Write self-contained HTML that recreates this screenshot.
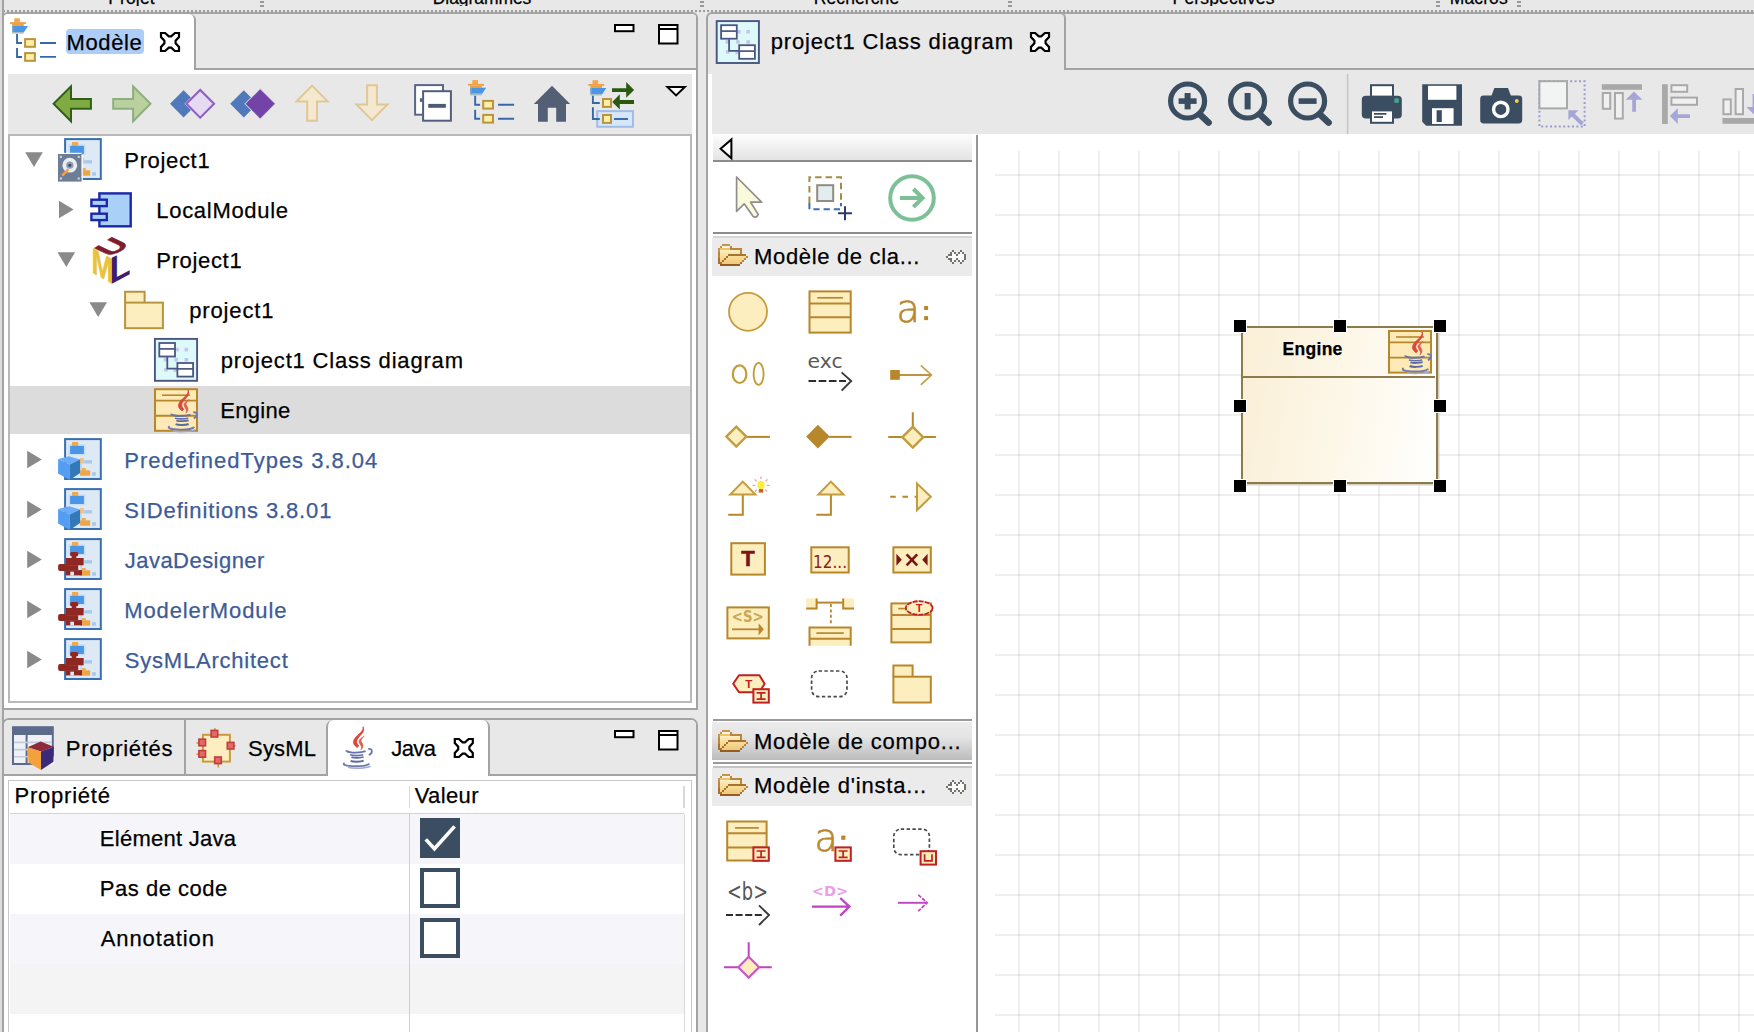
<!DOCTYPE html>
<html lang="fr"><head><meta charset="utf-8"><title>Modelio</title>
<style>
html,body{margin:0;padding:0}
body{width:1754px;height:1032px;overflow:hidden;background:#e8e8e8;position:relative;font-family:"Liberation Sans",sans-serif}
#root{position:absolute;left:0;top:0;width:1754px;height:1032px;overflow:hidden}
#root>div{position:absolute;box-sizing:border-box}
.t{position:absolute;white-space:nowrap;display:block;-webkit-text-stroke:0.25px currentColor}
#ov{position:absolute;left:0;top:0}
</style></head><body><div id="root">
<span id="t1" class="t" style="left:108.24999999999999px;top:-12.86px;line-height:23.5px;font-size:17.5px;color:#000;font-weight:normal;letter-spacing:0.13px;">Projet</span>
<span id="t2" class="t" style="left:432.75px;top:-12.86px;line-height:23.5px;font-size:17.5px;color:#000;font-weight:normal;letter-spacing:-0.07px;">Diagrammes</span>
<span id="t3" class="t" style="left:813.7px;top:-12.86px;line-height:23.5px;font-size:17.5px;color:#000;font-weight:normal;letter-spacing:0.11px;">Recherche</span>
<span id="t4" class="t" style="left:1172.6px;top:-12.86px;line-height:23.5px;font-size:17.5px;color:#000;font-weight:normal;letter-spacing:0.15px;">Perspectives</span>
<span id="t5" class="t" style="left:1449.8px;top:-12.86px;line-height:23.5px;font-size:17.5px;color:#000;font-weight:normal;letter-spacing:0.1px;">Macros</span>
<div style="left:0px;top:6.2px;width:1754px;height:3.8px;background:#e8e8e8"></div>
<div style="left:3px;top:10px;width:1751px;height:2px;background-image:repeating-linear-gradient(90deg,#9c9c9c 0,#9c9c9c 2px,transparent 2px,transparent 4px)"></div>
<div style="left:260px;top:1px;width:4px;height:2px;background:#9a9a9a"></div>
<div style="left:260px;top:5px;width:4px;height:2px;background:#9a9a9a"></div>
<div style="left:700px;top:1px;width:4px;height:2px;background:#9a9a9a"></div>
<div style="left:700px;top:5px;width:4px;height:2px;background:#9a9a9a"></div>
<div style="left:1008px;top:1px;width:4px;height:2px;background:#9a9a9a"></div>
<div style="left:1008px;top:5px;width:4px;height:2px;background:#9a9a9a"></div>
<div style="left:1435.5px;top:1px;width:4px;height:2px;background:#9a9a9a"></div>
<div style="left:1435.5px;top:5px;width:4px;height:2px;background:#9a9a9a"></div>
<div style="left:1517px;top:1px;width:4px;height:2px;background:#9a9a9a"></div>
<div style="left:1517px;top:5px;width:4px;height:2px;background:#9a9a9a"></div>
<div style="left:0px;top:0px;width:2px;height:1032px;background:#dedede"></div>
<div style="left:2px;top:0px;width:2px;height:1032px;background:#a4a4a4"></div>
<div style="left:2px;top:12px;width:696px;height:698px;border:2px solid #a3a3a3;border-radius:6px 6px 0 0;background:#fff"></div>
<div style="left:4px;top:14px;width:692px;height:56px;background:#e8e8e8;border-bottom:2px solid #a3a3a3;border-radius:4px 4px 0 0"></div>
<div style="left:4px;top:14px;width:192px;height:56px;background:#fff;border-right:2px solid #a3a3a3;border-radius:4px 6px 0 0"></div>
<div style="left:8px;top:74px;width:684px;height:60px;background:#e8e8e8"></div>
<div style="left:8px;top:134px;width:684px;height:569px;border:2px solid #b9b9b9;background:#fff"></div>
<div style="left:10px;top:386px;width:680px;height:48px;background:#dcdcdc"></div>
<div style="left:66px;top:28.5px;width:78px;height:25.5px;background:#accdf8;border-radius:4px"></div>
<span id="t6" class="t" style="left:66.5px;top:28.63px;line-height:28px;font-size:22px;color:#000;font-weight:normal;letter-spacing:0.64px;">Modèle</span>
<span id="t7" class="t" style="left:124.3px;top:146.83px;line-height:28px;font-size:22px;color:#000;font-weight:normal;letter-spacing:0.66px;">Project1</span>
<span id="t8" class="t" style="left:156.3px;top:196.83px;line-height:28px;font-size:22px;color:#000;font-weight:normal;letter-spacing:0.7px;">LocalModule</span>
<span id="t9" class="t" style="left:156.3px;top:246.83px;line-height:28px;font-size:22px;color:#000;font-weight:normal;letter-spacing:0.66px;">Project1</span>
<span id="t10" class="t" style="left:189.3px;top:296.83px;line-height:28px;font-size:22px;color:#000;font-weight:normal;letter-spacing:0.84px;">project1</span>
<span id="t11" class="t" style="left:220.8px;top:346.83px;line-height:28px;font-size:22px;color:#000;font-weight:normal;letter-spacing:0.82px;">project1 Class diagram</span>
<span id="t12" class="t" style="left:220.3px;top:396.83px;line-height:28px;font-size:22px;color:#000;font-weight:normal;letter-spacing:0.3px;">Engine</span>
<span id="t13" class="t" style="left:124.3px;top:446.83px;line-height:28px;font-size:22px;color:#3d5b96;font-weight:normal;letter-spacing:0.98px;">PredefinedTypes 3.8.04</span>
<span id="t14" class="t" style="left:124.3px;top:496.83px;line-height:28px;font-size:22px;color:#3d5b96;font-weight:normal;letter-spacing:0.86px;">SIDefinitions 3.8.01</span>
<span id="t15" class="t" style="left:124.8px;top:546.83px;line-height:28px;font-size:22px;color:#3d5b96;font-weight:normal;letter-spacing:0.46px;">JavaDesigner</span>
<span id="t16" class="t" style="left:124.3px;top:596.83px;line-height:28px;font-size:22px;color:#3d5b96;font-weight:normal;letter-spacing:0.87px;">ModelerModule</span>
<span id="t17" class="t" style="left:124.8px;top:646.83px;line-height:28px;font-size:22px;color:#3d5b96;font-weight:normal;letter-spacing:0.78px;">SysMLArchitect</span>
<div style="left:2px;top:718px;width:696px;height:330px;border:2px solid #a3a3a3;border-radius:7px 7px 0 0;background:#fff"></div>
<div style="left:4px;top:720px;width:692px;height:56px;background:#e8e8e8;border-bottom:2px solid #a3a3a3;border-radius:5px 5px 0 0"></div>
<div style="left:184px;top:720px;width:2px;height:55px;background:#a3a3a3"></div>
<div style="left:326px;top:720px;width:164px;height:56px;background:#fff;border-left:2px solid #a3a3a3;border-right:2px solid #a3a3a3;border-radius:7px 7px 0 0"></div>
<span id="t18" class="t" style="left:65.8px;top:734.93px;line-height:28px;font-size:22px;color:#000;font-weight:normal;letter-spacing:0.72px;">Propriétés</span>
<span id="t19" class="t" style="left:248.10000000000002px;top:734.93px;line-height:28px;font-size:22px;color:#000;font-weight:normal;letter-spacing:0.15px;">SysML</span>
<span id="t20" class="t" style="left:391.3px;top:734.93px;line-height:28px;font-size:22px;color:#000;font-weight:normal;letter-spacing:-0.62px;">Java</span>
<div style="left:8px;top:780px;width:684px;height:260px;border:1.5px solid #c9c9c9;background:#fff"></div>
<div style="left:10px;top:813px;width:674px;height:1px;background:#d4d4d4"></div>
<div style="left:10px;top:814px;width:674px;height:50px;background:#f5f5fa"></div>
<div style="left:10px;top:914px;width:674px;height:50px;background:#f5f5fa"></div>
<div style="left:10px;top:964px;width:674px;height:50px;background:#f4f4f4"></div>
<div style="left:408.5px;top:786px;width:1.5px;height:22px;background:#d9d9d9"></div>
<div style="left:683px;top:786px;width:1.5px;height:22px;background:#d9d9d9"></div>
<div style="left:408.5px;top:814px;width:1.5px;height:230px;background:#cfcfcf"></div>
<div style="left:683.5px;top:814px;width:1.5px;height:230px;background:#d9d9d9"></div>
<span id="t21" class="t" style="left:14.600000000000001px;top:782.43px;line-height:28px;font-size:22px;color:#000;font-weight:normal;letter-spacing:0.75px;">Propriété</span>
<span id="t22" class="t" style="left:414.7px;top:782.43px;line-height:28px;font-size:22px;color:#000;font-weight:normal;letter-spacing:0.37px;">Valeur</span>
<span id="t23" class="t" style="left:99.8px;top:824.63px;line-height:28px;font-size:22px;color:#000;font-weight:normal;letter-spacing:0.27px;">Elément Java</span>
<span id="t24" class="t" style="left:99.8px;top:874.63px;line-height:28px;font-size:22px;color:#000;font-weight:normal;letter-spacing:0.52px;">Pas de code</span>
<span id="t25" class="t" style="left:100.8px;top:924.63px;line-height:28px;font-size:22px;color:#000;font-weight:normal;letter-spacing:0.88px;">Annotation</span>
<div style="left:706px;top:12px;width:1060px;height:1032px;border:2px solid #a3a3a3;border-radius:6px 0 0 0;background:#e8e8e8"></div>
<div style="left:1064px;top:18px;width:700px;height:52px;border-bottom:2px solid #a3a3a3;border-left:2px solid #a3a3a3"></div>
<div style="left:1056px;top:12px;width:10px;height:12px;border-right:2px solid #a3a3a3;border-top:2px solid #a3a3a3;border-top-right-radius:6px;background:#e8e8e8"></div>
<div style="left:708px;top:74px;width:4px;height:960px;background:#fff"></div>
<span id="t26" class="t" style="left:770.8px;top:28.43px;line-height:28px;font-size:22px;color:#000;font-weight:normal;letter-spacing:0.82px;">project1 Class diagram</span>
<div style="left:712px;top:134px;width:260px;height:900px;background:#fff"></div>
<div style="left:972px;top:134px;width:6px;height:900px;background:#fff"></div>
<div style="left:976px;top:135px;width:2px;height:900px;background:#969696"></div>
<div style="left:978px;top:134px;width:776px;height:900px;background:#fff"></div>
<div style="left:713px;top:134px;width:259px;height:26px;background:linear-gradient(#fdfdfd,#e4e4e4)"></div>
<div style="left:713px;top:160px;width:259px;height:2px;background:#8c8c8c"></div>
<div style="left:713px;top:232px;width:259px;height:2px;background:#8c8c8c"></div>
<div style="left:713px;top:236px;width:259px;height:1.5px;background:#d6d6d6"></div>
<div style="left:712px;top:237.5px;width:260px;height:38.5px;background:#ebebeb"></div>
<span id="t27" class="t" style="left:754.0px;top:242.53px;line-height:28px;font-size:22px;color:#000;font-weight:normal;letter-spacing:0.67px;">Modèle de cla...</span>
<div style="left:713px;top:718.5px;width:259px;height:2px;background:#9a9a9a"></div>
<div style="left:712px;top:722px;width:260px;height:38px;background:linear-gradient(#ececec,#e4e4e4 40%,#bcbcbc)"></div>
<div style="left:713px;top:762px;width:259px;height:2px;background:#9a9a9a"></div>
<div style="left:713px;top:766px;width:259px;height:1.5px;background:#c4c4c4"></div>
<div style="left:712px;top:768px;width:260px;height:38px;background:#ebebeb"></div>
<span id="t28" class="t" style="left:754.0px;top:728.13px;line-height:28px;font-size:22px;color:#000;font-weight:normal;letter-spacing:0.79px;">Modèle de compo...</span>
<span id="t29" class="t" style="left:754.0px;top:772.43px;line-height:28px;font-size:22px;color:#000;font-weight:normal;letter-spacing:0.79px;">Modèle d'insta...</span>
<div style="left:995px;top:151px;width:760px;height:890px;background-image:linear-gradient(90deg,rgba(0,0,0,0.063) 2px,transparent 2px),linear-gradient(rgba(0,0,0,0.063) 2px,transparent 2px);background-size:40px 40px;background-position:23px 23px"></div>
<div style="left:1240.8px;top:326.3px;width:197.4px;height:157.8px;border:2px solid #8e7b4c;background:linear-gradient(100deg,#faefd6 0%,#fdf7e8 50%,#ffffff 100%);box-shadow:1.5px 1.5px 0 #d8d1c2"></div>
<div style="left:1242.8px;top:376px;width:192.4px;height:2px;background:#8e7b4c"></div>
<span id="t30" class="t" style="left:1282.6px;top:338.24px;line-height:23.5px;font-size:17.5px;color:#000;font-weight:bold;letter-spacing:0.28px;">Engine</span>
<svg id="ov" width="1754" height="1032" viewBox="0 0 1754 1032">
<g transform="translate(10.3 18)" ><g transform="translate(0 0)"><rect x="3.9" y="0.3" width="5.7" height="4" fill="#f2a74e"/><rect x="-0.3" y="4.1" width="15.9" height="1.9" fill="#f0a145"/><rect x="1.8" y="5.9" width="11.7" height="2.2" fill="#f0a145"/><path d="M1.8 8H17.7L13.8 14H1.8Z" fill="#4a96e6"/><rect x="1.8" y="8" width="1.5" height="6" fill="#8aa2b4"/><rect x="1.8" y="14" width="11.7" height="1.6" fill="#a9bcc6"/></g><path d="M6.75 15.9V24.95H11.7M6.75 30V38.95H11.7" fill="none" stroke="#3568a8" stroke-width="1.9"/><rect x="14.8" y="21.1" width="9.8" height="7.7" fill="#fdeea8" stroke="#b9943c" stroke-width="2"/><rect x="14.8" y="35.1" width="9.8" height="7.7" fill="#fdeea8" stroke="#b9943c" stroke-width="2"/><path d="M29.7 24.95h16M29.7 38.9h16" stroke="#3568a8" stroke-width="1.9"/></g>
<path transform="translate(170 42)" d="M-9 -9H-4.9L-1.2 -5.6H1.2L4.9 -9H9V-4.9L5.6 -1.2V1.2L9 4.9V9H4.9L1.2 5.6H-1.2L-4.9 9H-9V4.9L-5.6 1.2V-1.2L-9 -4.9Z" fill="#fff" stroke="#000" stroke-width="2.2" stroke-linejoin="miter"/>
<rect x="615" y="25" width="18.5" height="6.2" fill="#fff" stroke="#000" stroke-width="2"/>
<rect x="659" y="25" width="18.5" height="18.5" fill="#fff" stroke="#000" stroke-width="2"/>
<path d="M659 29h18.5" stroke="#000" stroke-width="2"/>
<polygon points="52.20,103.85 72.00,84.05 72.00,97.90 91.90,97.90 91.90,109.80 72.00,109.80 72.00,123.65" fill="#2f6016"/><polygon points="55.00,103.85 70.00,88.85 70.00,99.90 89.90,99.90 89.90,107.80 70.00,107.80 70.00,118.85" fill="#80ab43"/>
<polygon points="151.90,103.85 132.10,84.05 132.10,97.90 112.20,97.90 112.20,109.80 132.10,109.80 132.10,123.65" fill="#8eae7e"/><polygon points="149.10,103.85 134.10,88.85 134.10,99.90 114.20,99.90 114.20,107.80 134.10,107.80 134.10,118.85" fill="#bbd19d"/>
<path d="M170.0 103.8L183.6 90.2L197.2 103.8L183.6 117.39999999999999Z" fill="#4f79ba"/>
<path d="M184.39999999999998 103.8L200.2 88.0L216.0 103.8L200.2 119.6Z" fill="#d9d6e6"/>
<path d="M186.39999999999998 103.8L200.2 90.0L214.0 103.8L200.2 117.6Z" fill="#e6daf2" stroke="#8f5fc0" stroke-width="2"/>
<path d="M230.20000000000002 103.8L243.8 90.2L257.40000000000003 103.8L243.8 117.39999999999999Z" fill="#4f79ba"/>
<path d="M244.39999999999998 103.8L260.2 88.0L276.0 103.8L260.2 119.6Z" fill="#d9d6e6"/>
<path d="M245.6 103.8L260.2 89.2L274.8 103.8L260.2 118.39999999999999Z" fill="#7443a8"/>
<polygon points="312.10,84.30 330.20,102.40 318.00,102.40 318.00,121.70 306.20,121.70 306.20,102.40 294.00,102.40" fill="#dfc797"/><polygon points="312.10,87.10 325.40,100.40 316.00,100.40 316.00,119.70 308.20,119.70 308.20,100.40 298.80,100.40" fill="#f4e9ce"/>
<polygon points="366.10,84.30 377.90,84.30 377.90,103.60 389.80,103.60 371.95,121.50 354.10,103.60 366.10,103.60" fill="#dfc797"/><polygon points="368.10,86.30 375.90,86.30 375.90,105.60 385.00,105.60 371.95,118.70 358.90,105.60 368.10,105.60" fill="#f4e9ce"/>
<rect x="415.1" y="85.1" width="27.9" height="29.6" fill="#fff" stroke="#5a6783" stroke-width="2"/><rect x="419.9" y="98.2" width="2.4" height="3.7" fill="#56637f"/>
<rect x="423.1" y="91.2" width="27.8" height="29.5" fill="#fff" stroke="#525f7b" stroke-width="2"/>
<rect x="428.2" y="103.9" width="17.7" height="3.9" fill="#4f5b75"/>
<g transform="translate(468.4 79.8)" ><g transform="translate(0 0)"><rect x="3.9" y="0.3" width="5.7" height="4" fill="#f2a74e"/><rect x="-0.3" y="4.1" width="15.9" height="1.9" fill="#f0a145"/><rect x="1.8" y="5.9" width="11.7" height="2.2" fill="#f0a145"/><path d="M1.8 8H17.7L13.8 14H1.8Z" fill="#4a96e6"/><rect x="1.8" y="8" width="1.5" height="6" fill="#8aa2b4"/><rect x="1.8" y="14" width="11.7" height="1.6" fill="#a9bcc6"/></g><path d="M6.75 15.9V24.95H11.7M6.75 30V38.95H11.7" fill="none" stroke="#3568a8" stroke-width="1.9"/><rect x="14.8" y="21.1" width="9.8" height="7.7" fill="#fdeea8" stroke="#b9943c" stroke-width="2"/><rect x="14.8" y="35.1" width="9.8" height="7.7" fill="#fdeea8" stroke="#b9943c" stroke-width="2"/><path d="M29.7 24.95h16M29.7 38.9h16" stroke="#3568a8" stroke-width="1.9"/></g>
<path d="M552 85.8L570.2 104H566V121.8H556.2V107.7H547.8V121.8H538V104H533.8Z" fill="#525f75"/>
<g transform="translate(588 80.8)" ><g transform="translate(0.6 -0.9)"><rect x="3.9" y="0.3" width="5.7" height="4" fill="#f2a74e"/><rect x="-0.3" y="4.1" width="15.9" height="1.9" fill="#f0a145"/><rect x="1.8" y="5.9" width="11.7" height="2.2" fill="#f0a145"/><path d="M1.8 8H17.7L13.8 14H1.8Z" fill="#4a96e6"/><rect x="1.8" y="8" width="1.5" height="6" fill="#8aa2b4"/><rect x="1.8" y="14" width="11.7" height="1.6" fill="#a9bcc6"/></g><rect x="9.2" y="30.3" width="35.8" height="15.7" fill="#d6e6fb" stroke="#a0bde8" stroke-width="2"/><path d="M4.9 15V22.2H11.8M4.9 26.5V38.2H11.8" fill="none" stroke="#3568a8" stroke-width="1.9"/><rect x="15" y="18.2" width="8" height="7.9" fill="#fdeea8" stroke="#b9943c" stroke-width="2"/><rect x="15" y="34.2" width="8" height="7.9" fill="#fdeea8" stroke="#b9943c" stroke-width="2"/><path d="M26 38.2h14" stroke="#3568a8" stroke-width="1.9"/><path d="M24 7.4H38.2V1.2L46.1 9.3L38.2 16.9V11.2H24Z" fill="#2a5a10"/><path d="M46 19.3H31.8V13.4L24.2 21.2L31.8 28.8V23.2H46Z" fill="#2a5a10"/></g>
<path d="M667.4 87H684.8L676.1 95.4Z" fill="#fff" stroke="#000" stroke-width="2" stroke-linejoin="miter"/>
<path d="M25.2 152.3h17.6l-8.8 14.6z" fill="#8a8a8a"/>
<path d="M59 200.7l14.6 8.8l-14.6 8.8z" fill="#8a8a8a"/>
<path d="M57.5 252.3h17.6l-8.8 14.6z" fill="#8a8a8a"/>
<path d="M89.4 302.3h17.6l-8.8 14.6z" fill="#8a8a8a"/>
<path d="M27.2 450.7l14.6 8.8l-14.6 8.8z" fill="#8a8a8a"/>
<path d="M27.2 500.7l14.6 8.8l-14.6 8.8z" fill="#8a8a8a"/>
<path d="M27.2 550.7l14.6 8.8l-14.6 8.8z" fill="#8a8a8a"/>
<path d="M27.2 600.7l14.6 8.8l-14.6 8.8z" fill="#8a8a8a"/>
<path d="M27.2 650.7l14.6 8.8l-14.6 8.8z" fill="#8a8a8a"/>
<rect x="65.1" y="139.10" width="35.7" height="39.9" fill="#dee9f6" stroke="#386fb0" stroke-width="2"/><rect x="68.2" y="144.20" width="17.3" height="11.2" fill="#c9def4"/><rect x="72" y="142.00" width="6.2" height="4" fill="#f0a94e"/><rect x="70.1" y="145.90" width="13.8" height="8.1" fill="#4a96e6"/><rect x="80.1" y="158.00" width="3.8" height="5.5" fill="#f4c27a"/><rect x="84.2" y="160.20" width="7.8" height="3.3" fill="#a9c8ea"/><rect x="80.4" y="163.50" width="1.6" height="6.8" fill="#bdd7ef"/><rect x="82" y="168.10" width="3.8" height="2.4" fill="#f0a94e"/><rect x="80.1" y="170.30" width="10.1" height="5.4" fill="#f0a545"/><rect x="92" y="172.20" width="3.9" height="3.5" fill="#a9c8ea"/>
<g transform="translate(58 154)" ><rect x="0" y="0" width="23.6" height="27.6" fill="#6d7d96"/><rect x="23.6" y="1" width="1.2" height="25" fill="#fff"/><rect x="0" y="-1.2" width="23.6" height="1.2" fill="#fff"/><circle cx="11.8" cy="11.2" r="7.4" fill="#e9edf3"/><circle cx="11.8" cy="11.2" r="3.6" fill="#8e9bb0"/><circle cx="11.8" cy="11.2" r="1.5" fill="#3d4a66"/><path d="M4.2 21.6L10.4 15.2" stroke="#f3a23f" stroke-width="2.4"/><rect x="1.8" y="1.8" width="2.2" height="2.2" fill="#c6cedb"/><rect x="19.6" y="1.8" width="2.2" height="2.2" fill="#c6cedb"/><rect x="1.8" y="23.4" width="2.2" height="2.2" fill="#c6cedb"/><rect x="19.6" y="23.4" width="2.2" height="2.2" fill="#c6cedb"/></g>
<rect x="99.4" y="193.4" width="31.3" height="32.9" fill="#a9d0f7" stroke="#1c27ab" stroke-width="2.4"/>
<rect x="91.4" y="199.7" width="15.4" height="6.4" fill="#a9d0f7" stroke="#1c27ab" stroke-width="2.4"/>
<rect x="91.4" y="213.7" width="15.4" height="6.4" fill="#a9d0f7" stroke="#1c27ab" stroke-width="2.4"/>
<text transform="matrix(0.74 0.417 0 1 91.4 272)" font-family="Liberation Sans, sans-serif" font-weight="bold" font-size="35.6" fill="#e9c23c" stroke="#e9c23c" stroke-width="0.5">M</text><text transform="matrix(0.92 -0.488 0 1 109.4 284.9)" font-family="Liberation Sans, sans-serif" font-weight="bold" font-size="37.7" fill="#3f1f6b">L</text><text transform="matrix(1.31 -0.82 1.16 0.55 110.3 257.6)" font-family="Liberation Sans, sans-serif" font-weight="bold" font-size="22" fill="#7f1d2d" stroke="#7f1d2d" stroke-width="0.4">U</text>
<path d="M125.1 302.6V291.8H144.6V302.6" fill="#fdeec0" stroke="#b9943e" stroke-width="2"/>
<rect x="125.1" y="302.6" width="37.8" height="25.6" fill="#fdeec0" stroke="#b9943e" stroke-width="2"/>
<g transform="translate(154 338)" ><rect x="0.9" y="0.9" width="42.2" height="41.9" fill="#def9fa" stroke="#4a5681" stroke-width="1.9"/><rect x="21.2" y="9.799999999999999" width="3.6" height="3.6" fill="#c2c6e8"/><rect x="30.499999999999996" y="9.799999999999999" width="3.6" height="3.6" fill="#c2c6e8"/><rect x="9.7" y="19.9" width="3.6" height="3.6" fill="#c2c6e8"/><rect x="20.4" y="19.9" width="3.6" height="3.6" fill="#c2c6e8"/><rect x="30.499999999999996" y="20.0" width="3.6" height="3.6" fill="#c2c6e8"/><rect x="10.2" y="29.9" width="3.6" height="3.6" fill="#c2c6e8"/><rect x="19.599999999999998" y="30.400000000000002" width="3.6" height="3.6" fill="#c2c6e8"/><path d="M13.3 19V30.7H23" fill="none" stroke="#4a5681" stroke-width="1.8"/><rect x="5.3" y="5" width="15.7" height="13.5" fill="#fff" stroke="#4a5681" stroke-width="1.8"/><path d="M5.3 10.9h15.7" stroke="#4a5681" stroke-width="1.7"/><rect x="23.4" y="25" width="15.7" height="13.6" fill="#fff" stroke="#4a5681" stroke-width="1.8"/><path d="M23.4 30.9h15.7" stroke="#4a5681" stroke-width="1.7"/></g>
<g transform="translate(715.8 20.2)" ><rect x="0.9" y="0.9" width="42.2" height="41.9" fill="#def9fa" stroke="#4a5681" stroke-width="1.9"/><rect x="21.2" y="9.799999999999999" width="3.6" height="3.6" fill="#c2c6e8"/><rect x="30.499999999999996" y="9.799999999999999" width="3.6" height="3.6" fill="#c2c6e8"/><rect x="9.7" y="19.9" width="3.6" height="3.6" fill="#c2c6e8"/><rect x="20.4" y="19.9" width="3.6" height="3.6" fill="#c2c6e8"/><rect x="30.499999999999996" y="20.0" width="3.6" height="3.6" fill="#c2c6e8"/><rect x="10.2" y="29.9" width="3.6" height="3.6" fill="#c2c6e8"/><rect x="19.599999999999998" y="30.400000000000002" width="3.6" height="3.6" fill="#c2c6e8"/><path d="M13.3 19V30.7H23" fill="none" stroke="#4a5681" stroke-width="1.8"/><rect x="5.3" y="5" width="15.7" height="13.5" fill="#fff" stroke="#4a5681" stroke-width="1.8"/><path d="M5.3 10.9h15.7" stroke="#4a5681" stroke-width="1.7"/><rect x="23.4" y="25" width="15.7" height="13.6" fill="#fff" stroke="#4a5681" stroke-width="1.8"/><path d="M23.4 30.9h15.7" stroke="#4a5681" stroke-width="1.7"/></g>
<path transform="translate(1040 42)" d="M-9 -9H-4.9L-1.2 -5.6H1.2L4.9 -9H9V-4.9L5.6 -1.2V1.2L9 4.9V9H4.9L1.2 5.6H-1.2L-4.9 9H-9V4.9L-5.6 1.2V-1.2L-9 -4.9Z" fill="#fff" stroke="#000" stroke-width="2.2" stroke-linejoin="miter"/>
<g transform="translate(154 388.2)" ><rect x="1" y="1" width="42" height="41.6" fill="#fdeab6" stroke="#b8872c" stroke-width="2"/><path d="M8 7h28" stroke="#b8872c" stroke-width="1.6"/><path d="M1 12.4h42M1 27.6h42" stroke="#b8872c" stroke-width="1.9"/></g>
<g transform="translate(168 391.0)" ><path d="M20 -0.8C21.4 3.4 14.6 7 11.8 11C9.2 15 11 17.6 14 19.9L15.8 18.2C13.2 15.6 13 13.4 15 10.6C17.6 7 22.4 4 20 -0.8Z" fill="#d9473d" stroke="#d9473d" stroke-width="0.9"/><path d="M21.4 8.2C18 10.4 15.4 12.4 16 14.6C16.6 17 19.6 18.6 17.8 22.3C21.6 19 19.6 16 18.4 14.2C17.4 12.6 18.6 11 21.4 8.2Z" fill="#df5d52" stroke="#df5d52" stroke-width="0.5"/><path d="M3.4 22.6C3 24.4 9 25 13 25C17 25 20.4 24.4 22.6 23.6" fill="none" stroke="#6573ab" stroke-width="1.9"/><path d="M25.2 21.3C29.8 20.6 30.2 25.6 25.8 27.4" fill="none" stroke="#6b78ae" stroke-width="1.8"/><path d="M7 27.2C10 28.2 17 28.2 20.2 27.2" fill="none" stroke="#6573ab" stroke-width="1.7"/><path d="M8.4 29.6C11 30.4 17.6 30.4 20.6 29.4" fill="none" stroke="#5b6ba4" stroke-width="1.8"/><path d="M7.6 33.2C10 34.4 18 34.4 20.6 33" fill="none" stroke="#5b6ba4" stroke-width="2"/><path d="M1.6 35.4C-1.4 37 3 38.4 12 38.6C19 38.7 24.6 37.8 26.4 36" fill="none" stroke="#6f7cb2" stroke-width="1.9"/><path d="M5 39.8C10 41.2 23 40.8 27.6 38.6" fill="none" stroke="#a3abd0" stroke-width="1.5"/></g>
<rect x="65.1" y="439.10" width="35.7" height="39.9" fill="#dee9f6" stroke="#386fb0" stroke-width="2"/><rect x="68.2" y="444.20" width="17.3" height="11.2" fill="#c9def4"/><rect x="72" y="442.00" width="6.2" height="4" fill="#f0a94e"/><rect x="70.1" y="445.90" width="13.8" height="8.1" fill="#4a96e6"/><rect x="80.1" y="458.00" width="3.8" height="5.5" fill="#f4c27a"/><rect x="84.2" y="460.20" width="7.8" height="3.3" fill="#a9c8ea"/><rect x="80.4" y="463.50" width="1.6" height="6.8" fill="#bdd7ef"/><rect x="82" y="468.10" width="3.8" height="2.4" fill="#f0a94e"/><rect x="80.1" y="470.30" width="10.1" height="5.4" fill="#f0a545"/><rect x="92" y="472.20" width="3.9" height="3.5" fill="#a9c8ea"/>
<g transform="translate(58 454.1)" ><path d="M0.1 4.8L11 2.1L22.1 5.3L11.8 10.5Z" fill="#6aacf8"/><path d="M0.1 4.8L11.8 10.5V25.9L0.1 19.4Z" fill="#559df2"/><path d="M22.1 5.3L11.8 10.5V25.9L22.1 18.9Z" fill="#3379b8"/></g>
<rect x="65.1" y="489.10" width="35.7" height="39.9" fill="#dee9f6" stroke="#386fb0" stroke-width="2"/><rect x="68.2" y="494.20" width="17.3" height="11.2" fill="#c9def4"/><rect x="72" y="492.00" width="6.2" height="4" fill="#f0a94e"/><rect x="70.1" y="495.90" width="13.8" height="8.1" fill="#4a96e6"/><rect x="80.1" y="508.00" width="3.8" height="5.5" fill="#f4c27a"/><rect x="84.2" y="510.20" width="7.8" height="3.3" fill="#a9c8ea"/><rect x="80.4" y="513.50" width="1.6" height="6.8" fill="#bdd7ef"/><rect x="82" y="518.10" width="3.8" height="2.4" fill="#f0a94e"/><rect x="80.1" y="520.30" width="10.1" height="5.4" fill="#f0a545"/><rect x="92" y="522.20" width="3.9" height="3.5" fill="#a9c8ea"/>
<g transform="translate(58 504.1)" ><path d="M0.1 4.8L11 2.1L22.1 5.3L11.8 10.5Z" fill="#6aacf8"/><path d="M0.1 4.8L11.8 10.5V25.9L0.1 19.4Z" fill="#559df2"/><path d="M22.1 5.3L11.8 10.5V25.9L22.1 18.9Z" fill="#3379b8"/></g>
<rect x="65.1" y="539.10" width="35.7" height="39.9" fill="#dee9f6" stroke="#386fb0" stroke-width="2"/><rect x="68.2" y="544.20" width="17.3" height="11.2" fill="#c9def4"/><rect x="72" y="542.00" width="6.2" height="4" fill="#f0a94e"/><rect x="70.1" y="545.90" width="13.8" height="8.1" fill="#4a96e6"/><rect x="80.1" y="558.00" width="3.8" height="5.5" fill="#f4c27a"/><rect x="84.2" y="560.20" width="7.8" height="3.3" fill="#a9c8ea"/><rect x="80.4" y="563.50" width="1.6" height="6.8" fill="#bdd7ef"/><rect x="82" y="568.10" width="3.8" height="2.4" fill="#f0a94e"/><rect x="80.1" y="570.30" width="10.1" height="5.4" fill="#f0a545"/><rect x="92" y="572.20" width="3.9" height="3.5" fill="#a9c8ea"/>
<g transform="translate(58 551.1)" ><rect x="12.1" y="1" width="8.1" height="4.2" rx="1.6" fill="#8f2822"/><rect x="13.7" y="4" width="4.6" height="3.4" fill="#8f2822"/><rect x="8" y="6.9" width="17.6" height="7.3" fill="#8f2822"/><rect x="8" y="14" width="12.2" height="5.2" fill="#8f2822"/><rect x="8" y="19" width="16" height="5.3" fill="#8f2822"/><rect x="0.1" y="12.9" width="8.4" height="7.1" rx="2" fill="#8f2822"/><rect x="12.3" y="20.6" width="3.7" height="3.8" fill="#dee9f6"/></g>
<rect x="65.1" y="589.10" width="35.7" height="39.9" fill="#dee9f6" stroke="#386fb0" stroke-width="2"/><rect x="68.2" y="594.20" width="17.3" height="11.2" fill="#c9def4"/><rect x="72" y="592.00" width="6.2" height="4" fill="#f0a94e"/><rect x="70.1" y="595.90" width="13.8" height="8.1" fill="#4a96e6"/><rect x="80.1" y="608.00" width="3.8" height="5.5" fill="#f4c27a"/><rect x="84.2" y="610.20" width="7.8" height="3.3" fill="#a9c8ea"/><rect x="80.4" y="613.50" width="1.6" height="6.8" fill="#bdd7ef"/><rect x="82" y="618.10" width="3.8" height="2.4" fill="#f0a94e"/><rect x="80.1" y="620.30" width="10.1" height="5.4" fill="#f0a545"/><rect x="92" y="622.20" width="3.9" height="3.5" fill="#a9c8ea"/>
<g transform="translate(58 601.1)" ><rect x="12.1" y="1" width="8.1" height="4.2" rx="1.6" fill="#8f2822"/><rect x="13.7" y="4" width="4.6" height="3.4" fill="#8f2822"/><rect x="8" y="6.9" width="17.6" height="7.3" fill="#8f2822"/><rect x="8" y="14" width="12.2" height="5.2" fill="#8f2822"/><rect x="8" y="19" width="16" height="5.3" fill="#8f2822"/><rect x="0.1" y="12.9" width="8.4" height="7.1" rx="2" fill="#8f2822"/><rect x="12.3" y="20.6" width="3.7" height="3.8" fill="#dee9f6"/></g>
<rect x="65.1" y="639.10" width="35.7" height="39.9" fill="#dee9f6" stroke="#386fb0" stroke-width="2"/><rect x="68.2" y="644.20" width="17.3" height="11.2" fill="#c9def4"/><rect x="72" y="642.00" width="6.2" height="4" fill="#f0a94e"/><rect x="70.1" y="645.90" width="13.8" height="8.1" fill="#4a96e6"/><rect x="80.1" y="658.00" width="3.8" height="5.5" fill="#f4c27a"/><rect x="84.2" y="660.20" width="7.8" height="3.3" fill="#a9c8ea"/><rect x="80.4" y="663.50" width="1.6" height="6.8" fill="#bdd7ef"/><rect x="82" y="668.10" width="3.8" height="2.4" fill="#f0a94e"/><rect x="80.1" y="670.30" width="10.1" height="5.4" fill="#f0a545"/><rect x="92" y="672.20" width="3.9" height="3.5" fill="#a9c8ea"/>
<g transform="translate(58 651.1)" ><rect x="12.1" y="1" width="8.1" height="4.2" rx="1.6" fill="#8f2822"/><rect x="13.7" y="4" width="4.6" height="3.4" fill="#8f2822"/><rect x="8" y="6.9" width="17.6" height="7.3" fill="#8f2822"/><rect x="8" y="14" width="12.2" height="5.2" fill="#8f2822"/><rect x="8" y="19" width="16" height="5.3" fill="#8f2822"/><rect x="0.1" y="12.9" width="8.4" height="7.1" rx="2" fill="#8f2822"/><rect x="12.3" y="20.6" width="3.7" height="3.8" fill="#dee9f6"/></g>
<g transform="translate(12 726.2)" ><rect x="0" y="0" width="41.8" height="38.8" fill="#eef1f7"/><rect x="0" y="0" width="41.8" height="8.8" fill="#5b6a8d"/><path d="M1 8.8V38M14.6 8.8V38M40.8 8.8V30" stroke="#5b6a8d" stroke-width="2" fill="none"/><path d="M0 37.8H22" stroke="#5b6a8d" stroke-width="2"/><path d="M2 16.2H40M2 23.4H40M2 30.6H20" stroke="#c4cbdc" stroke-width="1.6"/><path d="M15.6 21L28.6 15.4L41.8 20.6L29 25.4Z" fill="#8e2a3a"/><path d="M15.6 21L29 25.4V43.8L16.4 36.4Z" fill="#f2a13d"/><path d="M41.8 20.6L29 25.4V43.8L41.4 35.6Z" fill="#3b2a78"/></g>
<g transform="translate(196.3 728.2)" ><path d="M18.6 0V6M0 14.8H6M0 26H6M39.4 17.6H33.6M22 39.4V33" stroke="#c89b3c" stroke-width="1.6"/><rect x="6.6" y="6.6" width="27" height="26.8" fill="#fdeec2" stroke="#c89b3c" stroke-width="2"/><rect x="14.8" y="2.2" width="6.6" height="6.6" fill="#de6a6a" stroke="#c63c3c" stroke-width="1.6"/><rect x="2.6" y="11" width="6.6" height="6.6" fill="#de6a6a" stroke="#c63c3c" stroke-width="1.6"/><rect x="2.6" y="22.4" width="6.6" height="6.6" fill="#de6a6a" stroke="#c63c3c" stroke-width="1.6"/><rect x="31" y="14.2" width="6.6" height="6.6" fill="#de6a6a" stroke="#c63c3c" stroke-width="1.6"/><rect x="18.4" y="28.8" width="6.6" height="6.6" fill="#de6a6a" stroke="#c63c3c" stroke-width="1.6"/></g>
<g transform="translate(343 727.6)" ><path d="M20 -0.8C21.4 3.4 14.6 7 11.8 11C9.2 15 11 17.6 14 19.9L15.8 18.2C13.2 15.6 13 13.4 15 10.6C17.6 7 22.4 4 20 -0.8Z" fill="#d9473d" stroke="#d9473d" stroke-width="0.9"/><path d="M21.4 8.2C18 10.4 15.4 12.4 16 14.6C16.6 17 19.6 18.6 17.8 22.3C21.6 19 19.6 16 18.4 14.2C17.4 12.6 18.6 11 21.4 8.2Z" fill="#df5d52" stroke="#df5d52" stroke-width="0.5"/><path d="M3.4 22.6C3 24.4 9 25 13 25C17 25 20.4 24.4 22.6 23.6" fill="none" stroke="#6573ab" stroke-width="1.9"/><path d="M25.2 21.3C29.8 20.6 30.2 25.6 25.8 27.4" fill="none" stroke="#6b78ae" stroke-width="1.8"/><path d="M7 27.2C10 28.2 17 28.2 20.2 27.2" fill="none" stroke="#6573ab" stroke-width="1.7"/><path d="M8.4 29.6C11 30.4 17.6 30.4 20.6 29.4" fill="none" stroke="#5b6ba4" stroke-width="1.8"/><path d="M7.6 33.2C10 34.4 18 34.4 20.6 33" fill="none" stroke="#5b6ba4" stroke-width="2"/><path d="M1.6 35.4C-1.4 37 3 38.4 12 38.6C19 38.7 24.6 37.8 26.4 36" fill="none" stroke="#6f7cb2" stroke-width="1.9"/><path d="M5 39.8C10 41.2 23 40.8 27.6 38.6" fill="none" stroke="#a3abd0" stroke-width="1.5"/></g>
<path transform="translate(463.8 748)" d="M-9 -9H-4.9L-1.2 -5.6H1.2L4.9 -9H9V-4.9L5.6 -1.2V1.2L9 4.9V9H4.9L1.2 5.6H-1.2L-4.9 9H-9V4.9L-5.6 1.2V-1.2L-9 -4.9Z" fill="#fff" stroke="#000" stroke-width="2.2" stroke-linejoin="miter"/>
<rect x="615" y="731" width="18.5" height="6.2" fill="#fff" stroke="#000" stroke-width="2"/>
<rect x="659" y="731" width="18.5" height="18.5" fill="#fff" stroke="#000" stroke-width="2"/>
<path d="M659 735h18.5" stroke="#000" stroke-width="2"/>
<rect x="420" y="818" width="40" height="40" fill="#3b4d61"/>
<path d="M425.8 839.4L434.4 848.8L454.6 826.4" fill="none" stroke="#fff" stroke-width="3.6"/>
<rect x="422" y="870" width="36" height="36" fill="#fff" stroke="#3b4d61" stroke-width="4"/>
<rect x="422" y="920" width="36" height="36" fill="#fff" stroke="#3b4d61" stroke-width="4"/>
<path d="M1199.6 114.2L1208.6 122.6" stroke="#3b4d61" stroke-width="6.6" stroke-linecap="round"/><circle cx="1187.6" cy="101" r="17" fill="none" stroke="#3b4d61" stroke-width="5.2"/><rect x="1178.6" y="98.3" width="18" height="5.6" fill="#3b4d61"/><rect x="1184.6" y="93" width="6" height="16.4" fill="#3b4d61"/>
<path d="M1259.6 114.2L1268.6 122.6" stroke="#3b4d61" stroke-width="6.6" stroke-linecap="round"/><circle cx="1247.6" cy="101" r="17" fill="none" stroke="#3b4d61" stroke-width="5.2"/><rect x="1244.6" y="93" width="6" height="16.4" fill="#3b4d61"/>
<path d="M1319.6 114.2L1328.6 122.6" stroke="#3b4d61" stroke-width="6.6" stroke-linecap="round"/><circle cx="1307.6" cy="101" r="17" fill="none" stroke="#3b4d61" stroke-width="5.2"/><rect x="1298.6" y="98.3" width="18" height="5.6" fill="#3b4d61"/>
<rect x="1346.8" y="74" width="1.6" height="60" fill="#c6c6c6"/>
<rect x="1361.8" y="95.8" width="40" height="22.6" rx="4" fill="#3b4d61"/><rect x="1371" y="85.2" width="22" height="11.4" fill="#fff" stroke="#3b4d61" stroke-width="2"/><rect x="1371" y="110.4" width="22" height="12.4" fill="#fff" stroke="#3b4d61" stroke-width="2"/><path d="M1374 113.8h12.4M1374 117.2h9" stroke="#3b4d61" stroke-width="1.7"/><rect x="1394.4" y="98.4" width="4.4" height="4.4" fill="#41a88b"/>
<path d="M1422.2 84.2H1462V125.8H1426.2L1422.2 121.8Z" fill="#3b4d61"/><rect x="1428" y="85.8" width="28.4" height="14" fill="#fff"/><rect x="1432" y="108.2" width="21.6" height="15.8" fill="#fff"/><rect x="1436.6" y="110.2" width="5.2" height="11.8" fill="#3b4d61"/>
<rect x="1480.2" y="95.4" width="42" height="28" rx="3.4" fill="#3b4d61"/><path d="M1491.4 96L1494.4 88H1508L1511 96Z" fill="#3b4d61"/><circle cx="1500.8" cy="109.4" r="7.2" fill="#3b4d61" stroke="#fff" stroke-width="3.4"/><circle cx="1516.8" cy="101" r="1.9" fill="#f2d54a"/>
<rect x="1539.4" y="81.2" width="45.2" height="45.4" fill="none" stroke="#9a9ad2" stroke-width="2" stroke-dasharray="2 2.4"/><rect x="1539.4" y="81.2" width="27.6" height="27.2" fill="#f2f3f3" stroke="#a9a9a9" stroke-width="2"/><path d="M1568.4 110.2H1578.4L1568.4 120Z" fill="#a6a6d6"/><path d="M1571.5 113.4L1582.4 124" stroke="#a6a6d6" stroke-width="4"/>
<rect x="1601.8" y="84.2" width="40.2" height="5.6" fill="#a9a9a9"/><rect x="1602.8" y="93" width="7.4" height="15.8" fill="#f0f0f0" stroke="#a9a9a9" stroke-width="2"/><rect x="1615" y="93" width="7.8" height="25.6" fill="#f0f0f0" stroke="#a9a9a9" stroke-width="2"/><path d="M1634 91.6L1642.4 99.8H1636V111.8H1632.2V99.8H1625.7Z" fill="#a6a6d6"/>
<rect x="1662" y="84.2" width="5.8" height="39.8" fill="#a9a9a9"/><rect x="1671.4" y="85.2" width="15.8" height="6.6" fill="#f0f0f0" stroke="#a9a9a9" stroke-width="2"/><rect x="1671.4" y="97.6" width="25.6" height="7.2" fill="#f0f0f0" stroke="#a9a9a9" stroke-width="2"/><path d="M1669.9 116.1L1677.8 108.2V114.2H1690V118H1677.8V124Z" fill="#a6a6d6"/>
<rect x="1722.4" y="118" width="40" height="5.8" fill="#a9a9a9"/><rect x="1723.4" y="99.4" width="7.4" height="14.8" fill="#f0f0f0" stroke="#a9a9a9" stroke-width="2"/><rect x="1735.6" y="89" width="7.4" height="25.2" fill="#f0f0f0" stroke="#a9a9a9" stroke-width="2"/><path d="M1754.6 115L1746.4 107H1752.6V94H1756.4V107H1762Z" fill="#a6a6d6"/>
<path d="M720.6 148.8L731.4 139.4V158.2Z" fill="#fff" stroke="#000" stroke-width="2" stroke-linejoin="miter"/>
<path d="M736.6 177V211.4L744.2 203.8L753.2 216.6Q756.6 218.4 758.2 214.4L750.6 202.2H761.6Z" fill="#fcfadc" stroke="#8f8f8f" stroke-width="1.7" stroke-linejoin="round"/>
<path d="M809.4 203V177.2H841V203" fill="none" stroke="#a38d48" stroke-width="2" stroke-dasharray="6.5 4"/><path d="M809.4 203V209.2H841V203" fill="none" stroke="#3d6db5" stroke-width="2" stroke-dasharray="6.2 4"/><rect x="817.2" y="185.2" width="16" height="15.8" fill="#e3edf0" stroke="#8f8d80" stroke-width="2"/><path d="M845 206.2V220.2M838 213.2H852" stroke="#2b3b6b" stroke-width="2"/>
<circle cx="912" cy="198" r="21.8" fill="none" stroke="#7dc097" stroke-width="4"/><path d="M900 198H922M913.4 189L922.6 198L913.4 207" fill="none" stroke="#7dc097" stroke-width="4"/>
<g transform="translate(718 244)" ><rect x="4" y="0" width="8" height="2" fill="#c6934a"/><rect x="2" y="2" width="2" height="2" fill="#c6934a"/><rect x="4" y="2" width="8" height="2" fill="#f3f3f1"/><rect x="12" y="2" width="2" height="2" fill="#b98540"/><rect x="0" y="4" width="2" height="2" fill="#c6934a"/><rect x="2" y="4" width="10" height="2" fill="#ecc464"/><rect x="12" y="4" width="12" height="2" fill="#b98540"/><rect x="0" y="6" width="2" height="2" fill="#c6934a"/><rect x="2" y="6" width="20" height="2" fill="#f9edc6"/><rect x="22" y="6" width="2" height="2" fill="#b98540"/><rect x="0" y="8" width="2" height="2" fill="#b98540"/><rect x="2" y="8" width="20" height="2" fill="#f8e6b0"/><rect x="22" y="8" width="2" height="2" fill="#b98540"/><rect x="0" y="10" width="2" height="2" fill="#b98540"/><rect x="2" y="10" width="8" height="2" fill="#f7e1a4"/><rect x="10" y="10" width="18" height="2" fill="#a8722f"/><rect x="0" y="12" width="2" height="2" fill="#b98540"/><rect x="2" y="12" width="6" height="2" fill="#f6dc98"/><rect x="8" y="12" width="2" height="2" fill="#a8722f"/><rect x="10" y="12" width="18" height="2" fill="#f6dc98"/><rect x="28" y="12" width="2" height="2" fill="#b98540"/><rect x="0" y="14" width="2" height="2" fill="#a8722f"/><rect x="2" y="14" width="4" height="2" fill="#f5d990"/><rect x="6" y="14" width="2" height="2" fill="#a8722f"/><rect x="8" y="14" width="18" height="2" fill="#f4d68c"/><rect x="26" y="14" width="2" height="2" fill="#b98540"/><rect x="0" y="16" width="2" height="2" fill="#a8722f"/><rect x="2" y="16" width="2" height="2" fill="#f4d488"/><rect x="4" y="16" width="2" height="2" fill="#a8722f"/><rect x="6" y="16" width="18" height="2" fill="#f2d085"/><rect x="24" y="16" width="2" height="2" fill="#b98540"/><rect x="0" y="18" width="4" height="2" fill="#a8722f"/><rect x="4" y="18" width="18" height="2" fill="#f1cc80"/><rect x="22" y="18" width="2" height="2" fill="#a8722f"/><rect x="2" y="20" width="20" height="2" fill="#975c26"/></g>
<g transform="translate(946 250)" ><rect x="6" y="2" width="2" height="2" fill="#fdfdfb"/><rect x="14" y="2" width="2" height="2" fill="#fdfdfb"/><rect x="6" y="4" width="2" height="2" fill="#fdfdfb"/><rect x="8" y="4" width="2" height="2" fill="#fdfdfb"/><rect x="12" y="4" width="2" height="2" fill="#fdfdfb"/><rect x="14" y="4" width="2" height="2" fill="#fdfdfb"/><rect x="16" y="4" width="2" height="2" fill="#fdfdfb"/><rect x="2" y="6" width="2" height="2" fill="#fdfdfb"/><rect x="4" y="6" width="2" height="2" fill="#fdfdfb"/><rect x="6" y="6" width="2" height="2" fill="#fdfdfb"/><rect x="8" y="6" width="2" height="2" fill="#fdfdfb"/><rect x="10" y="6" width="2" height="2" fill="#fdfdfb"/><rect x="12" y="6" width="2" height="2" fill="#fdfdfb"/><rect x="14" y="6" width="2" height="2" fill="#fdfdfb"/><rect x="16" y="6" width="2" height="2" fill="#fdfdfb"/><rect x="6" y="8" width="2" height="2" fill="#fdfdfb"/><rect x="8" y="8" width="2" height="2" fill="#fdfdfb"/><rect x="12" y="8" width="2" height="2" fill="#fdfdfb"/><rect x="14" y="8" width="2" height="2" fill="#fdfdfb"/><rect x="16" y="8" width="2" height="2" fill="#fdfdfb"/><rect x="6" y="10" width="2" height="2" fill="#fdfdfb"/><rect x="14" y="10" width="2" height="2" fill="#fdfdfb"/><rect x="6" y="0" width="2" height="2" fill="#73736d"/><rect x="14" y="0" width="2" height="2" fill="#73736d"/><rect x="4" y="2" width="2" height="2" fill="#73736d"/><rect x="8" y="2" width="2" height="2" fill="#73736d"/><rect x="12" y="2" width="2" height="2" fill="#73736d"/><rect x="16" y="2" width="2" height="2" fill="#73736d"/><rect x="2" y="4" width="2" height="2" fill="#73736d"/><rect x="4" y="4" width="2" height="2" fill="#73736d"/><rect x="10" y="4" width="2" height="2" fill="#73736d"/><rect x="18" y="4" width="2" height="2" fill="#73736d"/><rect x="0" y="6" width="2" height="2" fill="#73736d"/><rect x="18" y="6" width="2" height="2" fill="#73736d"/><rect x="2" y="8" width="2" height="2" fill="#73736d"/><rect x="4" y="8" width="2" height="2" fill="#73736d"/><rect x="10" y="8" width="2" height="2" fill="#73736d"/><rect x="18" y="8" width="2" height="2" fill="#73736d"/><rect x="4" y="10" width="2" height="2" fill="#73736d"/><rect x="8" y="10" width="2" height="2" fill="#73736d"/><rect x="12" y="10" width="2" height="2" fill="#73736d"/><rect x="16" y="10" width="2" height="2" fill="#73736d"/><rect x="6" y="12" width="2" height="2" fill="#73736d"/><rect x="14" y="12" width="2" height="2" fill="#73736d"/></g>
<g transform="translate(718 730)" ><rect x="4" y="0" width="8" height="2" fill="#c6934a"/><rect x="2" y="2" width="2" height="2" fill="#c6934a"/><rect x="4" y="2" width="8" height="2" fill="#f3f3f1"/><rect x="12" y="2" width="2" height="2" fill="#b98540"/><rect x="0" y="4" width="2" height="2" fill="#c6934a"/><rect x="2" y="4" width="10" height="2" fill="#ecc464"/><rect x="12" y="4" width="12" height="2" fill="#b98540"/><rect x="0" y="6" width="2" height="2" fill="#c6934a"/><rect x="2" y="6" width="20" height="2" fill="#f9edc6"/><rect x="22" y="6" width="2" height="2" fill="#b98540"/><rect x="0" y="8" width="2" height="2" fill="#b98540"/><rect x="2" y="8" width="20" height="2" fill="#f8e6b0"/><rect x="22" y="8" width="2" height="2" fill="#b98540"/><rect x="0" y="10" width="2" height="2" fill="#b98540"/><rect x="2" y="10" width="8" height="2" fill="#f7e1a4"/><rect x="10" y="10" width="18" height="2" fill="#a8722f"/><rect x="0" y="12" width="2" height="2" fill="#b98540"/><rect x="2" y="12" width="6" height="2" fill="#f6dc98"/><rect x="8" y="12" width="2" height="2" fill="#a8722f"/><rect x="10" y="12" width="18" height="2" fill="#f6dc98"/><rect x="28" y="12" width="2" height="2" fill="#b98540"/><rect x="0" y="14" width="2" height="2" fill="#a8722f"/><rect x="2" y="14" width="4" height="2" fill="#f5d990"/><rect x="6" y="14" width="2" height="2" fill="#a8722f"/><rect x="8" y="14" width="18" height="2" fill="#f4d68c"/><rect x="26" y="14" width="2" height="2" fill="#b98540"/><rect x="0" y="16" width="2" height="2" fill="#a8722f"/><rect x="2" y="16" width="2" height="2" fill="#f4d488"/><rect x="4" y="16" width="2" height="2" fill="#a8722f"/><rect x="6" y="16" width="18" height="2" fill="#f2d085"/><rect x="24" y="16" width="2" height="2" fill="#b98540"/><rect x="0" y="18" width="4" height="2" fill="#a8722f"/><rect x="4" y="18" width="18" height="2" fill="#f1cc80"/><rect x="22" y="18" width="2" height="2" fill="#a8722f"/><rect x="2" y="20" width="20" height="2" fill="#975c26"/></g>
<g transform="translate(718 774)" ><rect x="4" y="0" width="8" height="2" fill="#c6934a"/><rect x="2" y="2" width="2" height="2" fill="#c6934a"/><rect x="4" y="2" width="8" height="2" fill="#f3f3f1"/><rect x="12" y="2" width="2" height="2" fill="#b98540"/><rect x="0" y="4" width="2" height="2" fill="#c6934a"/><rect x="2" y="4" width="10" height="2" fill="#ecc464"/><rect x="12" y="4" width="12" height="2" fill="#b98540"/><rect x="0" y="6" width="2" height="2" fill="#c6934a"/><rect x="2" y="6" width="20" height="2" fill="#f9edc6"/><rect x="22" y="6" width="2" height="2" fill="#b98540"/><rect x="0" y="8" width="2" height="2" fill="#b98540"/><rect x="2" y="8" width="20" height="2" fill="#f8e6b0"/><rect x="22" y="8" width="2" height="2" fill="#b98540"/><rect x="0" y="10" width="2" height="2" fill="#b98540"/><rect x="2" y="10" width="8" height="2" fill="#f7e1a4"/><rect x="10" y="10" width="18" height="2" fill="#a8722f"/><rect x="0" y="12" width="2" height="2" fill="#b98540"/><rect x="2" y="12" width="6" height="2" fill="#f6dc98"/><rect x="8" y="12" width="2" height="2" fill="#a8722f"/><rect x="10" y="12" width="18" height="2" fill="#f6dc98"/><rect x="28" y="12" width="2" height="2" fill="#b98540"/><rect x="0" y="14" width="2" height="2" fill="#a8722f"/><rect x="2" y="14" width="4" height="2" fill="#f5d990"/><rect x="6" y="14" width="2" height="2" fill="#a8722f"/><rect x="8" y="14" width="18" height="2" fill="#f4d68c"/><rect x="26" y="14" width="2" height="2" fill="#b98540"/><rect x="0" y="16" width="2" height="2" fill="#a8722f"/><rect x="2" y="16" width="2" height="2" fill="#f4d488"/><rect x="4" y="16" width="2" height="2" fill="#a8722f"/><rect x="6" y="16" width="18" height="2" fill="#f2d085"/><rect x="24" y="16" width="2" height="2" fill="#b98540"/><rect x="0" y="18" width="4" height="2" fill="#a8722f"/><rect x="4" y="18" width="18" height="2" fill="#f1cc80"/><rect x="22" y="18" width="2" height="2" fill="#a8722f"/><rect x="2" y="20" width="20" height="2" fill="#975c26"/></g>
<g transform="translate(946 780)" ><rect x="6" y="2" width="2" height="2" fill="#fdfdfb"/><rect x="14" y="2" width="2" height="2" fill="#fdfdfb"/><rect x="6" y="4" width="2" height="2" fill="#fdfdfb"/><rect x="8" y="4" width="2" height="2" fill="#fdfdfb"/><rect x="12" y="4" width="2" height="2" fill="#fdfdfb"/><rect x="14" y="4" width="2" height="2" fill="#fdfdfb"/><rect x="16" y="4" width="2" height="2" fill="#fdfdfb"/><rect x="2" y="6" width="2" height="2" fill="#fdfdfb"/><rect x="4" y="6" width="2" height="2" fill="#fdfdfb"/><rect x="6" y="6" width="2" height="2" fill="#fdfdfb"/><rect x="8" y="6" width="2" height="2" fill="#fdfdfb"/><rect x="10" y="6" width="2" height="2" fill="#fdfdfb"/><rect x="12" y="6" width="2" height="2" fill="#fdfdfb"/><rect x="14" y="6" width="2" height="2" fill="#fdfdfb"/><rect x="16" y="6" width="2" height="2" fill="#fdfdfb"/><rect x="6" y="8" width="2" height="2" fill="#fdfdfb"/><rect x="8" y="8" width="2" height="2" fill="#fdfdfb"/><rect x="12" y="8" width="2" height="2" fill="#fdfdfb"/><rect x="14" y="8" width="2" height="2" fill="#fdfdfb"/><rect x="16" y="8" width="2" height="2" fill="#fdfdfb"/><rect x="6" y="10" width="2" height="2" fill="#fdfdfb"/><rect x="14" y="10" width="2" height="2" fill="#fdfdfb"/><rect x="6" y="0" width="2" height="2" fill="#73736d"/><rect x="14" y="0" width="2" height="2" fill="#73736d"/><rect x="4" y="2" width="2" height="2" fill="#73736d"/><rect x="8" y="2" width="2" height="2" fill="#73736d"/><rect x="12" y="2" width="2" height="2" fill="#73736d"/><rect x="16" y="2" width="2" height="2" fill="#73736d"/><rect x="2" y="4" width="2" height="2" fill="#73736d"/><rect x="4" y="4" width="2" height="2" fill="#73736d"/><rect x="10" y="4" width="2" height="2" fill="#73736d"/><rect x="18" y="4" width="2" height="2" fill="#73736d"/><rect x="0" y="6" width="2" height="2" fill="#73736d"/><rect x="18" y="6" width="2" height="2" fill="#73736d"/><rect x="2" y="8" width="2" height="2" fill="#73736d"/><rect x="4" y="8" width="2" height="2" fill="#73736d"/><rect x="10" y="8" width="2" height="2" fill="#73736d"/><rect x="18" y="8" width="2" height="2" fill="#73736d"/><rect x="4" y="10" width="2" height="2" fill="#73736d"/><rect x="8" y="10" width="2" height="2" fill="#73736d"/><rect x="12" y="10" width="2" height="2" fill="#73736d"/><rect x="16" y="10" width="2" height="2" fill="#73736d"/><rect x="6" y="12" width="2" height="2" fill="#73736d"/><rect x="14" y="12" width="2" height="2" fill="#73736d"/></g>
<circle cx="748" cy="311.8" r="19" fill="#fdeec0" stroke="#c39c3e" stroke-width="1.8"/>
<rect x="809.5" y="291.4" width="41.2" height="41.2" fill="#fdeec0" stroke="#b8872c" stroke-width="2"/><path d="M809.5 303.4h41.2M809.5 317.2h41.2" stroke="#b8872c" stroke-width="2"/><path d="M817.3 297.79999999999995h25.6" stroke="#b8872c" stroke-width="1.7"/>
<text x="896.6" y="321.6" font-family="DejaVu Sans Light, DejaVu Sans, sans-serif" font-weight="200" font-size="38" fill="#b8872c" stroke="#b8872c" stroke-width="0.7">a</text><rect x="924.1" y="306" width="4" height="4" fill="#b8872c"/><rect x="924.1" y="316.1" width="4" height="4" fill="#b8872c"/>
<ellipse cx="739.6" cy="374.2" rx="6.8" ry="8.8" fill="none" stroke="#c39c3e" stroke-width="2.2"/><ellipse cx="758.6" cy="373.9" rx="5" ry="11" fill="none" stroke="#c39c3e" stroke-width="1.9"/>
<text x="807.6" y="367.6" font-family="DejaVu Sans, sans-serif" font-size="20" fill="#5a5a5a" textLength="35" lengthAdjust="spacingAndGlyphs">exc</text><path d="M808.5 381H846" stroke="#2e2e2e" stroke-width="2" stroke-dasharray="7.6 2.6"/><path d="M841.6 372.4L851.2 381L841.6 390.6" fill="none" stroke="#3a3a3a" stroke-width="1.9"/>
<rect x="890.2" y="370" width="9.6" height="9.8" fill="#b8872c"/><path d="M899 375H931" stroke="#b8872c" stroke-width="1.8"/><path d="M920.8 365.4L931.4 375L920.8 384.8" fill="none" stroke="#c39c3e" stroke-width="1.6"/>
<path d="M747 436.9H770" stroke="#b8872c" stroke-width="2"/><path d="M726.3 436.6L736.3 426.6L746.3 436.6L736.3 446.6Z" fill="#fdeec0" stroke="#c39c3e" stroke-width="2.4"/>
<path d="M829 436.9H851.6" stroke="#b8872c" stroke-width="2"/><path d="M807.5 436.6L817.9 426.20000000000005L828.3 436.6L817.9 447.0Z" fill="#b8872c" stroke="#b8872c" stroke-width="2"/>
<path d="M888.2 437H935.9M912.8 412.2V428" stroke="#b8872c" stroke-width="2"/><path d="M902.4 437.2L912.8 426.8L923.1999999999999 437.2L912.8 447.59999999999997Z" fill="#fdeec0" stroke="#c39c3e" stroke-width="2.4"/>
<path d="M742.8 495V514.8H728.1999999999999" fill="none" stroke="#b8872c" stroke-width="2"/><path d="M742.8 481.6L755.4 494.6H730.1999999999999Z" fill="#fdeec0" stroke="#c39c3e" stroke-width="2"/>
<path d="M761 476.4V479M754.6 479.4L756.6 481.4M767.4 479.4L765.4 481.4M752.6 485.4H755.4M766.8 485.4H769.6M755 491.6L756.8 489.8M767 491.6L765.2 489.8" stroke="#e8a0b0" stroke-width="1.3"/><ellipse cx="761" cy="485" rx="3.6" ry="4.2" fill="#f8f038"/><rect x="758.8" y="489" width="4.4" height="3.6" fill="#c8642a"/>
<path d="M830.9 495V514.8H816.3" fill="none" stroke="#b8872c" stroke-width="2"/><path d="M830.9 481.6L843.5 494.6H818.3Z" fill="#fdeec0" stroke="#c39c3e" stroke-width="2"/>
<path d="M890.2 496.8H917" stroke="#b8872c" stroke-width="2" stroke-dasharray="5.6 6.6"/><path d="M917 483.6V510.2L930.8 496.8Z" fill="#fdeec0" stroke="#c39c3e" stroke-width="2"/>
<rect x="731.3" y="543.2" width="33.6" height="31.4" fill="#fdeec0" stroke="#b8872c" stroke-width="2"/><text x="748" y="565.8" text-anchor="middle" font-family="Liberation Sans, sans-serif" font-weight="bold" font-size="22" fill="#7a1616" stroke="#7a1616" stroke-width="0.6">T</text>
<rect x="811.3" y="547.3" width="37.4" height="25.2" fill="#fdeec0" stroke="#b8872c" stroke-width="2"/><text x="813" y="567.8" font-family="DejaVu Sans, sans-serif" font-size="18.5" fill="#8a2020" textLength="34" lengthAdjust="spacingAndGlyphs">12...</text>
<rect x="893.4" y="547.3" width="37.4" height="25.2" fill="#fdeec0" stroke="#b8872c" stroke-width="2"/><path d="M896.4 553.8L901.8 559.8L896.4 565.8ZM927.6 553.8L922.2 559.8L927.6 565.8Z" fill="#7a1616"/><path d="M906.6 554.4L917.2 565.4M917.2 554.4L906.6 565.4" stroke="#7a1616" stroke-width="2.6"/>
<rect x="727.4" y="607.4" width="41.4" height="31" fill="#fdeec0" stroke="#b8872c" stroke-width="2"/><text x="747.8" y="621.8" text-anchor="middle" font-family="DejaVu Sans, sans-serif" font-weight="bold" font-size="15" fill="#cba852" textLength="32" lengthAdjust="spacingAndGlyphs">&lt;S&gt;</text><path d="M732 629.3H759" stroke="#b8872c" stroke-width="1.8"/><path d="M758.6 623.2L763.8 629.3L758.6 635.6Z" fill="#b8872c"/>
<rect x="806.2" y="598.4" width="11.4" height="11.2" fill="#fdeec0"/><path d="M806.2 608.6H816.6V598.4" fill="none" stroke="#b8872c" stroke-width="2"/><rect x="842.2" y="598.4" width="11.8" height="11.2" fill="#fdeec0"/><path d="M854 608.6H843.2V598.4" fill="none" stroke="#b8872c" stroke-width="2"/><path d="M817 602.6H843" stroke="#b8872c" stroke-width="2"/><path d="M830.9 604V625" stroke="#b8872c" stroke-width="1.8" stroke-dasharray="3 2.4"/><rect x="809.5" y="627.4" width="41.2" height="18.4" fill="#fdeec0"/><path d="M809.5 645.8V627.4H850.7V645.8M809.5 638.8H850.7" fill="none" stroke="#b8872c" stroke-width="2"/><path d="M816.4 633.1H843.8" stroke="#b8872c" stroke-width="1.7"/>
<rect x="891.4" y="603.4" width="39.4" height="39" fill="#fdeec0" stroke="#b8872c" stroke-width="2"/><path d="M891.4 615.0h39.4M891.4 629.0h39.4" stroke="#b8872c" stroke-width="2"/><path d="M898.2 608.6H906" stroke="#b8872c" stroke-width="1.6"/><ellipse cx="919.2" cy="608" rx="13.4" ry="6.8" fill="#fdeec0" stroke="#c02020" stroke-width="1.8" stroke-dasharray="5 1"/><text x="919.2" y="612.4" text-anchor="middle" font-family="Liberation Sans, sans-serif" font-weight="bold" font-size="10.5" fill="#c02020">T</text>
<path d="M733.2 683.7L739 675.2H759.4L764.6 683.7L759.4 692.2H739Z" fill="#fdeec0" stroke="#c02020" stroke-width="2" stroke-linejoin="round"/><text x="748.8" y="688" text-anchor="middle" font-family="Liberation Sans, sans-serif" font-weight="bold" font-size="11.5" fill="#c02020">T</text><rect x="753.4" y="689.2" width="15.4" height="13.4" fill="#fdeec0" stroke="#c02020" stroke-width="2"/><path d="M756.6 692.8000000000001h9M756.6 699.2h9M761.1 692.8000000000001v6.4" stroke="#c02020" stroke-width="1.7" fill="none"/>
<rect x="811.6" y="671" width="35.4" height="25.6" rx="7" fill="#fff" stroke="#4a4a4a" stroke-width="1.7" stroke-dasharray="3.4 2.4"/>
<path d="M893.4 676.7V665.4H912.6V676.7" fill="#fdeec0" stroke="#b8872c" stroke-width="2"/><rect x="893.4" y="676.7" width="37.4" height="25.8" fill="#fdeec0" stroke="#b8872c" stroke-width="2"/>
<rect x="727.2" y="821.5" width="39.4" height="39" fill="#fdeec0" stroke="#b8872c" stroke-width="2"/><path d="M727.2 833.3h39.4M727.2 847.5h39.4" stroke="#b8872c" stroke-width="2"/><path d="M735.0 827.9h23.799999999999997" stroke="#b8872c" stroke-width="1.7"/><rect x="753.4" y="847.4" width="15.4" height="13.4" fill="#fdeec0" stroke="#c02020" stroke-width="2"/><path d="M756.6 851.0h9M756.6 857.4h9M761.1 851.0v6.4" stroke="#c02020" stroke-width="1.7" fill="none"/>
<text x="814.6" y="851.4" font-family="DejaVu Sans Light, DejaVu Sans, sans-serif" font-weight="200" font-size="38" fill="#b8872c" stroke="#b8872c" stroke-width="0.7">a</text><rect x="841.2" y="835.6" width="4.2" height="4.2" fill="#b8872c"/><rect x="835.4" y="847.4" width="15.4" height="13.4" fill="#fdeec0" stroke="#c02020" stroke-width="2"/><path d="M838.6 851.0h9M838.6 857.4h9M843.1 851.0v6.4" stroke="#c02020" stroke-width="1.7" fill="none"/>
<rect x="893.8" y="829.2" width="35.6" height="25.4" rx="7" fill="#fff" stroke="#4a4a4a" stroke-width="1.7" stroke-dasharray="3.4 2.4"/><rect x="920.6" y="851.2" width="15.4" height="13.4" fill="#fdeec0" stroke="#c02020" stroke-width="2"/><path d="M924.6 854.2v6.6h7.4V854.2" stroke="#c02020" stroke-width="1.7" fill="none" transform="translate(0 0)"/>
<text x="727" y="900.2" font-family="DejaVu Sans, sans-serif" font-size="25.5" fill="#555" textLength="41" lengthAdjust="spacingAndGlyphs">&lt;b&gt;</text><path d="M726 915.1H764" stroke="#2e2e2e" stroke-width="2" stroke-dasharray="7 2.6"/><path d="M759 905.4L769 915.1L759 925" fill="none" stroke="#3a3a3a" stroke-width="1.9"/>
<text x="830" y="895.9" text-anchor="middle" font-family="DejaVu Sans, sans-serif" font-weight="bold" font-size="14.5" fill="#ea9fe8" textLength="36.5" lengthAdjust="spacingAndGlyphs">&lt;D&gt;</text><path d="M812 906.6H848.6M840.2 898L849.4 906.6L840.2 915.6" fill="none" stroke="#c043c4" stroke-width="2.3"/>
<path d="M898 902.8H927" stroke="#c043c4" stroke-width="1.9"/><path d="M918.2 894.8L927.2 902.8L918.2 911.2" fill="none" stroke="#c043c4" stroke-width="1.7" stroke-dasharray="4 1.2"/>
<path d="M724 967.2H771.8M748.7 942.2V957" stroke="#c043c4" stroke-width="2"/><path d="M738.3000000000001 967.2L748.7 956.8000000000001L759.1 967.2L748.7 977.6Z" fill="#fdeec0" stroke="#cc55cc" stroke-width="2.2"/>
<rect x="1233.5" y="319.5" width="13" height="13" fill="#000" stroke="#fff" stroke-width="1"/>
<rect x="1233.5" y="399.5" width="13" height="13" fill="#000" stroke="#fff" stroke-width="1"/>
<rect x="1233.5" y="479.5" width="13" height="13" fill="#000" stroke="#fff" stroke-width="1"/>
<rect x="1333.5" y="319.5" width="13" height="13" fill="#000" stroke="#fff" stroke-width="1"/>
<rect x="1333.5" y="479.5" width="13" height="13" fill="#000" stroke="#fff" stroke-width="1"/>
<rect x="1433.5" y="319.5" width="13" height="13" fill="#000" stroke="#fff" stroke-width="1"/>
<rect x="1433.5" y="399.5" width="13" height="13" fill="#000" stroke="#fff" stroke-width="1"/>
<rect x="1433.5" y="479.5" width="13" height="13" fill="#000" stroke="#fff" stroke-width="1"/>
<g transform="translate(1388 330)" ><rect x="1" y="1" width="42" height="41.6" fill="#fdeab6" stroke="#b8872c" stroke-width="2"/><path d="M8 7h28" stroke="#b8872c" stroke-width="1.6"/><path d="M1 12.4h42M1 27.6h42" stroke="#b8872c" stroke-width="1.9"/></g>
<g transform="translate(1402 332.8)" ><path d="M20 -0.8C21.4 3.4 14.6 7 11.8 11C9.2 15 11 17.6 14 19.9L15.8 18.2C13.2 15.6 13 13.4 15 10.6C17.6 7 22.4 4 20 -0.8Z" fill="#d9473d" stroke="#d9473d" stroke-width="0.9"/><path d="M21.4 8.2C18 10.4 15.4 12.4 16 14.6C16.6 17 19.6 18.6 17.8 22.3C21.6 19 19.6 16 18.4 14.2C17.4 12.6 18.6 11 21.4 8.2Z" fill="#df5d52" stroke="#df5d52" stroke-width="0.5"/><path d="M3.4 22.6C3 24.4 9 25 13 25C17 25 20.4 24.4 22.6 23.6" fill="none" stroke="#6573ab" stroke-width="1.9"/><path d="M25.2 21.3C29.8 20.6 30.2 25.6 25.8 27.4" fill="none" stroke="#6b78ae" stroke-width="1.8"/><path d="M7 27.2C10 28.2 17 28.2 20.2 27.2" fill="none" stroke="#6573ab" stroke-width="1.7"/><path d="M8.4 29.6C11 30.4 17.6 30.4 20.6 29.4" fill="none" stroke="#5b6ba4" stroke-width="1.8"/><path d="M7.6 33.2C10 34.4 18 34.4 20.6 33" fill="none" stroke="#5b6ba4" stroke-width="2"/><path d="M1.6 35.4C-1.4 37 3 38.4 12 38.6C19 38.7 24.6 37.8 26.4 36" fill="none" stroke="#6f7cb2" stroke-width="1.9"/><path d="M5 39.8C10 41.2 23 40.8 27.6 38.6" fill="none" stroke="#a3abd0" stroke-width="1.5"/></g>
</svg>
</div></body></html>
